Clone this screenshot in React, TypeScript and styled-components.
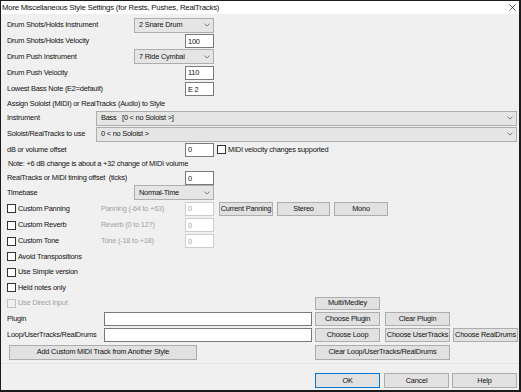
import React from 'react';
import styled, { createGlobalStyle } from 'styled-components';

const GlobalStyle = createGlobalStyle`
	html, body {
		margin: 0;
		padding: 0;
		background: #ffffff;
	}
`;

const Window = styled.div`
	width: 521px;
	height: 392px;
	box-sizing: border-box;

	display: flex;
	flex-direction: column;

	border-style: solid;
	border-color: #1b1b1b;
	border-width: 1px 2px 2px 1px;
	background: #f0f0f0;
	overflow: hidden;

	font-family: "Liberation Sans", Arial, sans-serif;
	font-size: 7.4px;
	letter-spacing: -0.22px;
	line-height: 1;
	color: #111111;
`;

const TitleBar = styled.div`
	height: 13px;
	flex-shrink: 0;

	display: flex;
	align-items: center;
	justify-content: space-between;
	padding: 0 3px 0 1px;

	background: #ffffff;
`;

const Title = styled.span`
	font-size: 7.8px;
	white-space: nowrap;
`;

const Body = styled.div`
	display: flex;
	flex-direction: column;
	padding: 3px 2px 0 6px;
`;

const Row = styled.div<{ $h?: number }>`
	height: ${(p) => p.$h ?? 16}px;
	display: flex;
	align-items: center;
`;

const Label = styled.span<{ $w?: number; $muted?: boolean; $ml?: number }>`
	width: ${(p) => (p.$w ? `${p.$w}px` : 'auto')};
	flex-shrink: 0;
	margin-left: ${(p) => p.$ml ?? 0}px;
	white-space: pre;
	color: ${(p) => (p.$muted ? '#a2a2a2' : 'inherit')};
`;

const SelectBox = styled.div<{ $w?: number }>`
	box-sizing: border-box;
	height: 15px;
	width: ${(p) => (p.$w ? `${p.$w}px` : 'auto')};
	flex: ${(p) => (p.$w ? '0 0 auto' : '1 1 auto')};

	display: flex;
	align-items: center;
	justify-content: space-between;
	padding: 0 3px 0 4px;

	background: #e5e5e5;
	border: 1px solid #adadad;
	white-space: pre;
`;

const TextBox = styled.input<{ $w: number; $disabled?: boolean }>`
	box-sizing: border-box;
	width: ${(p) => p.$w}px;
	height: 14px;
	flex-shrink: 0;
	margin: 0;
	padding: 0 0 0 2px;

	font: inherit;
	letter-spacing: inherit;
	color: ${(p) => (p.$disabled ? '#a2a2a2' : '#111111')};
	background: #ffffff;
	border: 1px solid ${(p) => (p.$disabled ? '#cccccc' : '#7a7a7a')};
	outline: none;
`;

const Check = styled.label<{ $w?: number; $disabled?: boolean; $ml?: number }>`
	width: ${(p) => (p.$w ? `${p.$w}px` : 'auto')};
	flex-shrink: 0;
	margin-left: ${(p) => p.$ml ?? 0}px;

	display: flex;
	align-items: center;
	gap: 2px;

	white-space: nowrap;
	color: ${(p) => (p.$disabled ? '#a2a2a2' : 'inherit')};
`;

const CheckBox = styled.span<{ $disabled?: boolean }>`
	box-sizing: border-box;
	width: 9px;
	height: 9px;
	flex-shrink: 0;

	background: ${(p) => (p.$disabled ? '#f0f0f0' : '#ffffff')};
	border: 1px solid ${(p) => (p.$disabled ? '#c2c2c2' : '#333333')};
`;

const Button = styled.button<{ $w: number; $h?: number; $ml?: number; $default?: boolean }>`
	box-sizing: border-box;
	width: ${(p) => p.$w}px;
	height: ${(p) => p.$h ?? 14}px;
	flex-shrink: 0;
	margin: 0 0 0 ${(p) => p.$ml ?? 0}px;
	padding: 0;

	font: inherit;
	letter-spacing: inherit;
	color: #111111;
	white-space: nowrap;
	background: #e1e1e1;
	border: 1px solid ${(p) => (p.$default ? '#0078d7' : '#adadad')};
`;

const Footer = styled.div`
	margin-top: 2px;
	padding: 9px 2px 0 0;

	display: flex;
	justify-content: flex-end;

	border-top: 1px solid #e3e3e3;
`;

const Chevron = () => (
	<svg width="6" height="4" viewBox="0 0 6 4">
		<polyline points="0.5,0.6 3,3.1 5.5,0.6" fill="none" stroke="#6e6e6e" strokeWidth="0.9" />
	</svg>
);

const CloseIcon = () => (
	<svg width="7" height="7" viewBox="0 0 7 7">
		<path d="M0.5 0.5 L6.5 6.5 M6.5 0.5 L0.5 6.5" stroke="#333333" strokeWidth="0.8" />
	</svg>
);

const DropDown = ({ value, w }: { value: string; w?: number }) => (
	<SelectBox $w={w}>
		<span>{value}</span>
		<Chevron />
	</SelectBox>
);

const Option = ({ text, w, disabled, ml }: { text: string; w?: number; disabled?: boolean; ml?: number }) => (
	<Check $w={w} $disabled={disabled} $ml={ml}>
		<CheckBox $disabled={disabled} />
		{text}
	</Check>
);

export default function App() {
	return (
		<>
			<GlobalStyle />
			<Window>
				<TitleBar>
					<Title>More Miscellaneous Style Settings (for Rests, Pushes, RealTracks)</Title>
					<CloseIcon />
				</TitleBar>

				<Body>
					<Row $h={16}>
						<Label $w={127}>Drum Shots/Holds Instrument</Label>
						<DropDown w={80} value="2 Snare Drum" />
					</Row>
					<Row $h={16}>
						<Label $w={178}>Drum Shots/Holds Velocity</Label>
						<TextBox $w={29} readOnly value="100" />
					</Row>
					<Row $h={15}>
						<Label $w={127}>Drum Push Instrument</Label>
						<DropDown w={80} value="7 Ride Cymbal" />
					</Row>
					<Row $h={17}>
						<Label $w={178}>Drum Push Velocity</Label>
						<TextBox $w={29} readOnly value="110" />
					</Row>
					<Row $h={16}>
						<Label $w={178}>Lowest Bass Note (E2=default)</Label>
						<TextBox $w={29} readOnly value="E 2" />
					</Row>

					<Row $h={13}>
						<Label>Assign Soloist (MIDI) or RealTracks (Audio) to Style</Label>
					</Row>
					<Row $h={16}>
						<Label $w={89}>Instrument</Label>
						<DropDown value={'Bass   [0 < no Soloist >]'} />
					</Row>
					<Row $h={16}>
						<Label $w={89}>Soloist/RealTracks to use</Label>
						<DropDown value="0 < no Soloist >" />
					</Row>
					<Row $h={15}>
						<Label $w={178}>dB or volume offset</Label>
						<TextBox $w={29} readOnly value="0" />
						<Option ml={3} text="MIDI velocity changes supported" />
					</Row>
					<Row $h={14}>
						<Label $ml={1}>Note: +6 dB change is about a +32 change of MIDI volume</Label>
					</Row>
					<Row $h={14}>
						<Label $w={178}>RealTracks or MIDI timing offset  (ticks)</Label>
						<TextBox $w={29} readOnly value="0" />
					</Row>
					<Row $h={15}>
						<Label $w={127}>Timebase</Label>
						<DropDown w={80} value="Normal-Time" />
					</Row>

					<Row $h={17}>
						<Option w={94} text="Custom Panning" />
						<Label $w={84} $muted>Panning (-64 to +63)</Label>
						<TextBox $w={29} $disabled readOnly value="0" />
						<Button $w={54} $ml={5}>Current Panning</Button>
						<Button $w={53} $ml={4}>Stereo</Button>
						<Button $w={54} $ml={4}>Mono</Button>
					</Row>
					<Row $h={16}>
						<Option w={94} text="Custom Reverb" />
						<Label $w={84} $muted>Reverb (0 to 127)</Label>
						<TextBox $w={29} $disabled readOnly value="0" />
					</Row>
					<Row $h={16}>
						<Option w={94} text="Custom Tone" />
						<Label $w={84} $muted>Tone (-18 to +18)</Label>
						<TextBox $w={29} $disabled readOnly value="0" />
					</Row>
					<Row $h={15}>
						<Option text="Avoid Transpositions" />
					</Row>
					<Row $h={16}>
						<Option text="Use Simple version" />
					</Row>
					<Row $h={15}>
						<Option text="Held notes only" />
					</Row>
					<Row $h={16}>
						<Option w={308} disabled text="Use Direct Input" />
						<Button $w={65} $h={13}>Multi/Medley</Button>
					</Row>
					<Row $h={16}>
						<Label $w={97}>Plugin</Label>
						<TextBox $w={208} readOnly value="" />
						<Button $w={65} $ml={3}>Choose Plugin</Button>
						<Button $w={65} $ml={5}>Clear Plugin</Button>
					</Row>
					<Row $h={16}>
						<Label $w={97}>Loop/UserTracks/RealDrums</Label>
						<TextBox $w={208} readOnly value="" />
						<Button $w={65} $ml={3}>Choose Loop</Button>
						<Button $w={65} $ml={5}>Choose UserTracks</Button>
						<Button $w={65} $ml={3}>Choose RealDrums</Button>
					</Row>
					<Row $h={18}>
						<Button $w={188} $h={15} $ml={2}>Add Custom MIDI Track from Another Style</Button>
						<Button $w={135} $h={15} $ml={118}>Clear Loop/UserTracks/RealDrums</Button>
					</Row>
				</Body>

				<Footer>
					<Button $w={65} $h={15} $default>OK</Button>
					<Button $w={65} $h={15} $ml={4}>Cancel</Button>
					<Button $w={65} $h={15} $ml={3}>Help</Button>
				</Footer>
			</Window>
		</>
	);
}
